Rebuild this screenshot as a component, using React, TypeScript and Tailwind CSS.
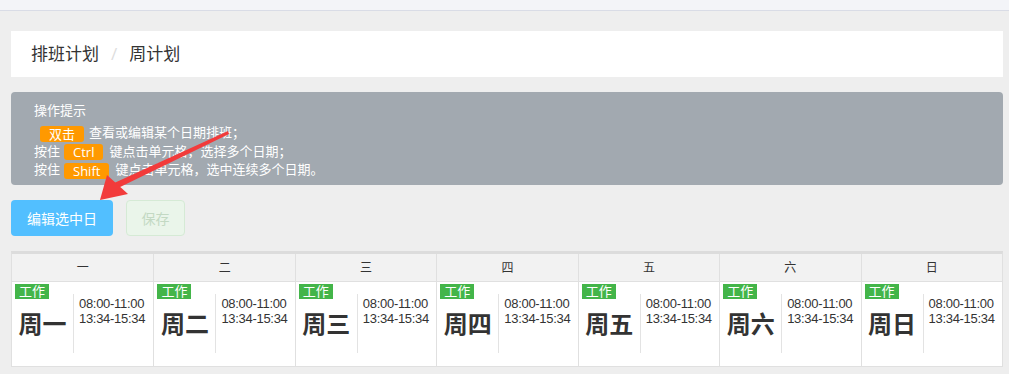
import React from "react";

const days = ["一", "二", "三", "四", "五", "六", "日"];

const Badge = ({ text }: { text: string }) => (
  <span className="inline-block h-[16px] leading-[16px] px-[9px] rounded-[3px] bg-[#ff9900] text-white text-[13px] align-middle">
    {text}
  </span>
);

const DayCell = ({ day, first }: { day: string; first: boolean }) => {
  return (
    <div
      className={`relative h-[84px] bg-white ${first ? "" : "border-l border-[#e0e0e0]"}`}
    >
      <span className="absolute top-[2px] left-[3px] h-[15px] w-[34px] bg-[#43b549] text-white text-[13px] leading-[15px] text-center">
        工作
      </span>
      <div className="flex pt-[12px]">
        <div className="w-[62px] h-[59px] flex items-center justify-center border-r border-[#e3e3e3]">
          <span className="text-[24px] font-bold text-[#333] leading-none">周{day}</span>
        </div>
        <div
          className="pl-[5px] pt-[2px] text-[13px] leading-[15px] tracking-[-0.3px] text-[#333]"
          style={{ fontFamily: '"Liberation Sans", Arial, sans-serif' }}
        >
          <div>08:00-11:00</div>
          <div>13:34-15:34</div>
        </div>
      </div>
    </div>
  );
};

export default function App() {
  return (
    <div
      className="w-[1009px] h-[374px] bg-[#eeeeee] overflow-hidden relative"
      style={{ fontFamily: '"Open Sans", "Noto Sans CJK SC", sans-serif' }}
    >
      <div className="h-[11px] bg-[#f3f4f8] border-b border-[#d9dce6]" />

      <div className="px-[11px] pr-[6px] pt-[20px]">
        <div className="h-[46px] bg-white flex items-center pl-[20px] text-[17px] text-[#333]">
          <span>排班计划</span>
          <span className="mx-[12px] text-[#dddddd]">/</span>
          <span>周计划</span>
        </div>

        <div className="mt-[15px] h-[93px] rounded-[4px] bg-[#a2a9b0] text-white text-[13px] px-[23px] pt-[9px]">
          <div className="leading-[18px] mb-[4px]">操作提示</div>
          <div className="leading-[18px]">
            <span className="ml-[6px] mr-[5px]">
              <Badge text="双击" />
            </span>
            查看或编辑某个日期排班；
          </div>
          <div className="leading-[18px]">
            按住<span className="ml-[4px] mr-[6px]"><Badge text="Ctrl" /></span>键点击单元格，选择多个日期；
          </div>
          <div className="leading-[18px]">
            按住<span className="ml-[4px] mr-[6px]"><Badge text="Shift" /></span>键点击单元格，选中连续多个日期。
          </div>
        </div>

        <div className="mt-[15px] flex gap-[13px]">
          <button className="h-[36px] w-[102px] rounded-[4px] bg-[#52bfff] text-white text-[14px]">
            编辑选中日
          </button>
          <button className="h-[36px] w-[59px] rounded-[4px] bg-[#eaf5ea] border border-[#d5ead5] text-[#c3d9c3] text-[14px]">
            保存
          </button>
        </div>

        <div className="mt-[15px] border-t-[3px] border-[#dcdcdc] border-l border-r border-b border-l-[#e0e0e0] border-r-[#e0e0e0] border-b-[#e0e0e0]">
          <div className="grid grid-cols-7 bg-[#f2f2f2] border-b border-[#e0e0e0]">
            {days.map((d, i) => (
              <div
                key={d}
                className={`h-[27px] flex items-center justify-center text-[12px] text-[#333] ${i === 0 ? "" : "border-l border-[#e0e0e0]"}`}
              >
                {d}
              </div>
            ))}
          </div>
          <div className="grid grid-cols-7">
            {days.map((d, i) => (
              <DayCell key={d} day={d} first={i === 0} />
            ))}
          </div>
        </div>
      </div>

      <svg className="absolute left-0 top-0 pointer-events-none" width="1009" height="374">
        <polygon points="228,131 229,134 116,189 112,184" fill="#f23b3b" />
        <polygon points="100,200 107,175 128,194" fill="#f23b3b" />
      </svg>
    </div>
  );
}
